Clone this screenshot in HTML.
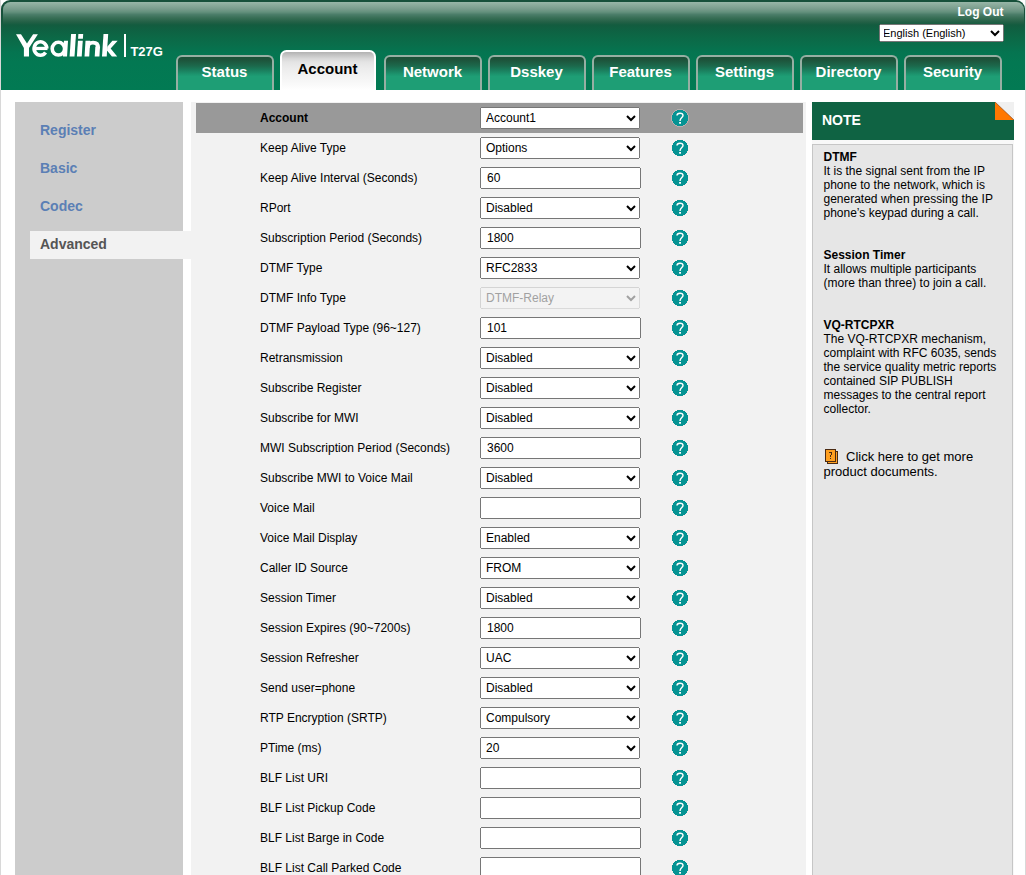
<!DOCTYPE html>
<html><head><meta charset="utf-8"><title>Yealink T27G Phone</title>
<style>
*{box-sizing:border-box}
html,body{margin:0;padding:0;background:#fff;overflow:hidden}
body{width:1026px;height:875px;position:relative;font-family:"Liberation Sans",sans-serif;font-size:12px;color:#000}
#edgeL,#edgeR{position:absolute;top:0;width:1px;height:875px;background:#d8d8d8}
#edgeL{left:0}#edgeR{left:1025px}
#hdr{position:absolute;left:1px;top:0;width:1024px;height:90px;border-radius:9px 9px 0 0;
 background-image:linear-gradient(to bottom,#17503a 0,#17503a 10px,#16553c 18px,#135c3f 25px,#0f6142 30px,#0c6846 37px,#096e4b 45px,#057450 52px,#037852 62px,#027a53 90px);}
#hdrin{position:absolute;left:2.5px;top:2px;width:1021px;height:88px;border-radius:7.5px 7.5px 0 0;
 background-image:linear-gradient(to bottom,#98b6a8 0,#8aab9b 3px,#789c8c 7px,#64917d 10px,#4b7d69 12.5px,#376e55 16px,#236046 20px,#135c3f 23px,#0f6142 28px,#0c6846 35px,#096e4b 43px,#057450 50px,#037852 60px,#027a53 88px);}
#sep{position:absolute;left:124px;top:34px;width:2px;height:23px;background:#fff}
#model{position:absolute;left:130.4px;top:45px;font-size:13px;font-weight:bold;color:#fff;line-height:14px}
#logout{position:absolute;left:957.5px;top:5px;font-size:12px;font-weight:bold;color:#fff;line-height:14px}
#lang{position:absolute;left:879px;top:24px;width:125px;height:18px;font-family:"Liberation Sans",sans-serif;font-size:11px;margin:0;padding:0;text-indent:-1px}
.tab{position:absolute;top:55px;width:98px;height:35px;border:2px solid #96afa3;border-bottom:0;border-radius:6px 6px 0 0;
 background:linear-gradient(to bottom,#1c5038 0,#1d543b 3px,#1c694c 9px,#1a7d5c 13px,#1c936d 17px,#1e9e75 19.5px,#1e9e75 100%);
 color:#fff;font-size:15px;font-weight:bold;text-align:center;line-height:30px;padding-right:1px}
#atab{position:absolute;left:280px;top:50px;width:96px;height:40px;border:2px solid #fff;border-bottom:0;border-radius:6.5px 6.5px 0 0;
 background:linear-gradient(to bottom,#b2b2b2 0,#c3c3c3 3px,#d7d7d7 6.5px,#e4e4e4 10px,#ececec 16px,#f2f2f2 23px,#fafafa 33px,#fff 38px);color:#000;font-size:15px;font-weight:bold;text-align:center;line-height:34px;padding-right:1px}
#side{position:absolute;left:15px;top:102px;width:168px;height:773px;background:#cccccc}
.nav{position:absolute;left:40px;font-size:14px;font-weight:bold;color:#5b7fb5;line-height:18px}
#adv{position:absolute;left:30px;top:231px;width:162px;height:28px;background:#f2f2f2}
#main{position:absolute;left:191px;top:102px;width:615px;height:773px;background:#f2f2f2}
#hrow{position:absolute;left:196px;top:103px;width:607px;height:30px;background:#999999}
.lab{position:absolute;left:260px;line-height:16px;font-size:12px;white-space:nowrap}
.b{font-weight:bold}
.sel{position:absolute;left:480px;width:160px;height:22px;padding-left:1px;font-family:"Liberation Sans",sans-serif;font-size:12px;margin:0}
.inp{position:absolute;left:480px;width:161px;height:22px;font-family:"Liberation Sans",sans-serif;font-size:12px;margin:0;padding:1px 5px}
.q{position:absolute;left:671px}
#nhead{position:absolute;left:812px;top:102px;width:202px;height:38px;background:#0f6343}
#ntitle{position:absolute;left:822px;top:111px;font-size:14px;font-weight:bold;color:#fff;line-height:18px}
#nwrap{position:absolute;left:812px;top:140px;width:202px;height:735px;background:#f8f8f8}
#nbody{position:absolute;left:812px;top:144px;width:201px;height:740px;background:#e6e6e6;border:1px solid #c6c6c6}
#ntext{position:absolute;left:823.5px;top:150px;width:185px;font-size:12px;line-height:14px}
#ntext b{display:block}
#ntext p{margin:0 0 28px 0}
#more{position:absolute;left:823.5px;top:449px;width:185px;font-size:13px;line-height:15px;text-indent:22.5px}
</style></head><body>
<svg width="0" height="0" style="position:absolute"><defs>
<g id="qi"><path d="M6 0h6v1h-6zM4 1h10v1h-10zM3 2h12v1h-12zM2 3h14v1h-14zM1 4h16v1h-16zM1 5h16v1h-16zM0 6h18v1h-18zM0 7h18v1h-18zM0 8h18v1h-18zM0 9h18v1h-18zM0 10h18v1h-18zM0 11h18v1h-18zM1 12h16v1h-16zM1 13h16v1h-16zM2 14h14v1h-14zM3 15h12v1h-12zM4 16h10v1h-10zM6 17h6v1h-6z" fill="#ffe6e2" fill-opacity="0.3" shape-rendering="crispEdges"/><path d="M6 1h6v1h-6zM4 2h10v1h-10zM3 3h12v1h-12zM2 4h14v1h-14zM2 5h14v1h-14zM1 6h16v1h-16zM1 7h16v1h-16zM1 8h16v1h-16zM1 9h16v1h-16zM1 10h16v1h-16zM1 11h16v1h-16zM2 12h14v1h-14zM2 13h14v1h-14zM3 14h12v1h-12zM4 15h10v1h-10zM6 16h6v1h-6z" fill="#059393" shape-rendering="crispEdges"/>
<path d="M6 6.6 C6 4.8 7.3 4.2 9 4.2 C10.8 4.2 12 5 12 6.4 C12 8.3 9 8.8 9 11.9" fill="none" stroke="#fff" stroke-width="1.45"/>
<rect x="8.1" y="13" width="1.9" height="1.7" fill="#fff"/></g>
</defs></svg>
<div id="edgeL"></div><div id="edgeR"></div>
<div id="hdr"></div><div id="hdrin"></div>
<svg id="logo" width="130" height="30" viewBox="10 30 130 30" style="position:absolute;left:10px;top:30px" fill="#fff">
<path d="M16 34.2 L21 34.2 L27 43.5 L33.1 34.2 L37.9 34.2 L29 47.9 L29 56.6 L23.9 56.6 L23.9 47.9 Z"/>
<path d="M34.2 48.45 L47.5 48.45" fill="none" stroke="#fff" stroke-width="3.3"/><path d="M46.8 48.6 A6.35 6.7 0 1 0 45.6 52.45" fill="none" stroke="#fff" stroke-width="3.6"/>
<ellipse cx="58.4" cy="48.65" rx="6.2" ry="6.35" fill="none" stroke="#fff" stroke-width="3.6"/>
<g transform="translate(0,56.6) skewX(-3.8) translate(0,-56.6)">
<rect x="62.9" y="40.8" width="4.1" height="15.8"/>
<rect x="69.6" y="34.1" width="4.9" height="22.5"/>
<rect x="76.9" y="40.8" width="4.8" height="15.8"/><rect x="76.9" y="34.1" width="4.8" height="4.6"/>
<rect x="84.5" y="40.8" width="4.7" height="15.8"/>
<path d="M87 48 C87 44.2 88.8 42.6 92 42.6 C95.2 42.6 97.4 44.2 97.4 48" fill="none" stroke="#fff" stroke-width="3.9"/><rect x="94.7" y="46.5" width="4.7" height="10.1"/>
<rect x="102" y="34.1" width="4.7" height="22.5"/>
<path d="M106.6 46.8 L111.3 40.8 L116.6 40.8 L110.1 48.4 L117.2 56.6 L111.9 56.6 L106.6 50.6 Z"/>
</g>
</svg><div id="sep"></div><div id="model">T27G</div>
<div id="logout">Log Out</div>
<select id="lang"><option>English (English)</option></select>
<div class="tab" style="left:176px">Status</div>
<div class="tab" style="left:384px">Network</div>
<div class="tab" style="left:488px">Dsskey</div>
<div class="tab" style="left:592px">Features</div>
<div class="tab" style="left:696px">Settings</div>
<div class="tab" style="left:800px">Directory</div>
<div class="tab" style="left:904px">Security</div>
<div id="atab">Account</div>
<div id="side"></div>
<div id="main"></div>
<div id="adv"></div>
<div class="nav" style="top:121px">Register</div>
<div class="nav" style="top:159px">Basic</div>
<div class="nav" style="top:197px">Codec</div>
<div class="nav" style="top:235px;color:#555">Advanced</div>
<div id="hrow"></div>
<div class="lab b" style="top:110px">Account</div>
<select class="sel" style="top:107px"><option>Account1</option></select>
<svg class="q" style="top:109px" width="18" height="18" viewBox="0 0 18 18"><use href="#qi"/></svg>
<div class="lab" style="top:140px">Keep Alive Type</div>
<select class="sel" style="top:137px"><option>Options</option></select>
<svg class="q" style="top:139px" width="18" height="18" viewBox="0 0 18 18"><use href="#qi"/></svg>
<div class="lab" style="top:170px">Keep Alive Interval (Seconds)</div>
<input class="inp" type="text" value="60" style="top:167px">
<svg class="q" style="top:169px" width="18" height="18" viewBox="0 0 18 18"><use href="#qi"/></svg>
<div class="lab" style="top:200px">RPort</div>
<select class="sel" style="top:197px"><option>Disabled</option></select>
<svg class="q" style="top:199px" width="18" height="18" viewBox="0 0 18 18"><use href="#qi"/></svg>
<div class="lab" style="top:230px">Subscription Period (Seconds)</div>
<input class="inp" type="text" value="1800" style="top:227px">
<svg class="q" style="top:229px" width="18" height="18" viewBox="0 0 18 18"><use href="#qi"/></svg>
<div class="lab" style="top:260px">DTMF Type</div>
<select class="sel" style="top:257px"><option>RFC2833</option></select>
<svg class="q" style="top:259px" width="18" height="18" viewBox="0 0 18 18"><use href="#qi"/></svg>
<div class="lab" style="top:290px">DTMF Info Type</div>
<select class="sel" disabled style="top:287px"><option>DTMF-Relay</option></select>
<svg class="q" style="top:289px" width="18" height="18" viewBox="0 0 18 18"><use href="#qi"/></svg>
<div class="lab" style="top:320px">DTMF Payload Type (96~127)</div>
<input class="inp" type="text" value="101" style="top:317px">
<svg class="q" style="top:319px" width="18" height="18" viewBox="0 0 18 18"><use href="#qi"/></svg>
<div class="lab" style="top:350px">Retransmission</div>
<select class="sel" style="top:347px"><option>Disabled</option></select>
<svg class="q" style="top:349px" width="18" height="18" viewBox="0 0 18 18"><use href="#qi"/></svg>
<div class="lab" style="top:380px">Subscribe Register</div>
<select class="sel" style="top:377px"><option>Disabled</option></select>
<svg class="q" style="top:379px" width="18" height="18" viewBox="0 0 18 18"><use href="#qi"/></svg>
<div class="lab" style="top:410px">Subscribe for MWI</div>
<select class="sel" style="top:407px"><option>Disabled</option></select>
<svg class="q" style="top:409px" width="18" height="18" viewBox="0 0 18 18"><use href="#qi"/></svg>
<div class="lab" style="top:440px">MWI Subscription Period (Seconds)</div>
<input class="inp" type="text" value="3600" style="top:437px">
<svg class="q" style="top:439px" width="18" height="18" viewBox="0 0 18 18"><use href="#qi"/></svg>
<div class="lab" style="top:470px">Subscribe MWI to Voice Mail</div>
<select class="sel" style="top:467px"><option>Disabled</option></select>
<svg class="q" style="top:469px" width="18" height="18" viewBox="0 0 18 18"><use href="#qi"/></svg>
<div class="lab" style="top:500px">Voice Mail</div>
<input class="inp" type="text" value="" style="top:497px">
<svg class="q" style="top:499px" width="18" height="18" viewBox="0 0 18 18"><use href="#qi"/></svg>
<div class="lab" style="top:530px">Voice Mail Display</div>
<select class="sel" style="top:527px"><option>Enabled</option></select>
<svg class="q" style="top:529px" width="18" height="18" viewBox="0 0 18 18"><use href="#qi"/></svg>
<div class="lab" style="top:560px">Caller ID Source</div>
<select class="sel" style="top:557px"><option>FROM</option></select>
<svg class="q" style="top:559px" width="18" height="18" viewBox="0 0 18 18"><use href="#qi"/></svg>
<div class="lab" style="top:590px">Session Timer</div>
<select class="sel" style="top:587px"><option>Disabled</option></select>
<svg class="q" style="top:589px" width="18" height="18" viewBox="0 0 18 18"><use href="#qi"/></svg>
<div class="lab" style="top:620px">Session Expires (90~7200s)</div>
<input class="inp" type="text" value="1800" style="top:617px">
<svg class="q" style="top:619px" width="18" height="18" viewBox="0 0 18 18"><use href="#qi"/></svg>
<div class="lab" style="top:650px">Session Refresher</div>
<select class="sel" style="top:647px"><option>UAC</option></select>
<svg class="q" style="top:649px" width="18" height="18" viewBox="0 0 18 18"><use href="#qi"/></svg>
<div class="lab" style="top:680px">Send user=phone</div>
<select class="sel" style="top:677px"><option>Disabled</option></select>
<svg class="q" style="top:679px" width="18" height="18" viewBox="0 0 18 18"><use href="#qi"/></svg>
<div class="lab" style="top:710px">RTP Encryption (SRTP)</div>
<select class="sel" style="top:707px"><option>Compulsory</option></select>
<svg class="q" style="top:709px" width="18" height="18" viewBox="0 0 18 18"><use href="#qi"/></svg>
<div class="lab" style="top:740px">PTime (ms)</div>
<select class="sel" style="top:737px"><option>20</option></select>
<svg class="q" style="top:739px" width="18" height="18" viewBox="0 0 18 18"><use href="#qi"/></svg>
<div class="lab" style="top:770px">BLF List URI</div>
<input class="inp" type="text" value="" style="top:767px">
<svg class="q" style="top:769px" width="18" height="18" viewBox="0 0 18 18"><use href="#qi"/></svg>
<div class="lab" style="top:800px">BLF List Pickup Code</div>
<input class="inp" type="text" value="" style="top:797px">
<svg class="q" style="top:799px" width="18" height="18" viewBox="0 0 18 18"><use href="#qi"/></svg>
<div class="lab" style="top:830px">BLF List Barge in Code</div>
<input class="inp" type="text" value="" style="top:827px">
<svg class="q" style="top:829px" width="18" height="18" viewBox="0 0 18 18"><use href="#qi"/></svg>
<div class="lab" style="top:860px">BLF List Call Parked Code</div>
<input class="inp" type="text" value="" style="top:857px">
<svg class="q" style="top:859px" width="18" height="18" viewBox="0 0 18 18"><use href="#qi"/></svg>
<div id="nwrap"></div>
<div id="nhead"></div>
<svg style="position:absolute;left:995px;top:102px" width="19" height="18" viewBox="0 0 19 18"><rect width="19" height="18" fill="#f0f0f0"/><path d="M0 0 L19 18 L0 18 Z" fill="#ff7700"/><path d="M0 0 L19 18" stroke="#7a3a10" stroke-width="0.6"/></svg>
<div id="ntitle">NOTE</div>
<div id="nbody"></div>
<div id="ntext"><p><b>DTMF</b>It is the signal sent from the IP phone to the network, which is generated when pressing the IP phone&rsquo;s keypad during a call.</p>
<p><b>Session Timer</b>It allows multiple participants (more than three) to join a call.</p>
<p><b>VQ-RTCPXR</b>The VQ-RTCPXR mechanism, complaint with RFC 6035, sends the service quality metric reports contained SIP PUBLISH messages to the central report collector.</p></div>
<svg style="position:absolute;left:825px;top:449px" width="13" height="15" viewBox="0 0 13 15"><rect x="2.5" y="2.5" width="10" height="12" fill="#ffa020" stroke="#4a2a12"/><rect x="0.5" y="0.5" width="10" height="12" fill="#ffa020" stroke="#4a2a12"/><path d="M4 3h3v1h-3zM6 4h1v2h-1zM5 6h1v2h-1zM5 9h1v1h-1z" fill="#4a2a12"/></svg>
<div id="more">Click here to get more product documents.</div>
</body></html>
